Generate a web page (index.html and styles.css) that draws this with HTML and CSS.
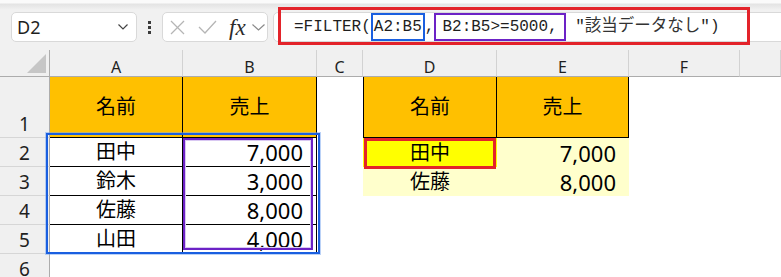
FILE: index.html
```html
<!DOCTYPE html>
<html lang="ja">
<head>
  <meta charset="UTF-8" />
  <title>FILTER 関数</title>
  <link rel="stylesheet" href="styles.css">
</head>
<body>

<div class="toolbar">
  <div class="namebox">
    <span class="cellref">D2</span>
    <svg class="chev" width="10" height="6" viewBox="0 0 10 6"><polyline points="0.5,0.5 5,5 9.5,0.5" /></svg>
  </div>
  <div class="grip"><i></i><i></i><i></i></div>
  <div class="fxbox">
    <svg class="ico-x" width="15" height="15" viewBox="0 0 15 15"><line x1="1" y1="1" x2="14" y2="14" /><line x1="14" y1="1" x2="1" y2="14" /></svg>
    <svg class="ico-ok" width="19" height="14" viewBox="0 0 19 14"><polyline points="1,7 7,13 18,1" /></svg>
    <span class="fx">fx</span>
    <svg class="chev small" width="13" height="7" viewBox="0 0 13 7"><polyline points="0.5,0.5 6.5,6 12.5,0.5" /></svg>
  </div>
  <div class="formula">
    <div class="ftext">=FILTER(<span class="ref blue">A2:B5</span>,<span class="ref purple">B2:B5&gt;=5000,</span> "<span class="jp">該当データなし</span>")</div>
    <div class="mark"></div>
  </div>
</div>

<div class="sheet">
  <!-- column headers -->
  <div class="ch corner"><span class="tri"></span></div>
  <div class="ch">A</div>
  <div class="ch">B</div>
  <div class="ch">C</div>
  <div class="ch">D</div>
  <div class="ch">E</div>
  <div class="ch">F</div>
  <div class="ch"></div>

  <!-- row 1 -->
  <div class="rh">1</div>
  <div class="c bd head">名前</div>
  <div class="c bd head">売上</div>
  <div class="c"></div>
  <div class="c bd bl head">名前</div>
  <div class="c bd head">売上</div>
  <div class="c"></div>
  <div class="c"></div>

  <!-- row 2 -->
  <div class="rh">2</div>
  <div class="c bd name">田中</div>
  <div class="c bd num">7,000</div>
  <div class="c"></div>
  <div class="c name hit">田中</div>
  <div class="c num pale">7,000</div>
  <div class="c"></div>
  <div class="c"></div>

  <!-- row 3 -->
  <div class="rh">3</div>
  <div class="c bd name">鈴木</div>
  <div class="c bd num">3,000</div>
  <div class="c"></div>
  <div class="c name pale">佐藤</div>
  <div class="c num pale">8,000</div>
  <div class="c"></div>
  <div class="c"></div>

  <!-- row 4 -->
  <div class="rh">4</div>
  <div class="c bd name">佐藤</div>
  <div class="c bd num">8,000</div>
  <div class="c"></div>
  <div class="c"></div>
  <div class="c"></div>
  <div class="c"></div>
  <div class="c"></div>

  <!-- row 5 -->
  <div class="rh">5</div>
  <div class="c bd name">山田</div>
  <div class="c bd num">4,000</div>
  <div class="c"></div>
  <div class="c"></div>
  <div class="c"></div>
  <div class="c"></div>
  <div class="c"></div>

  <!-- row 6 -->
  <div class="rh">6</div>
  <div class="c"></div>
  <div class="c"></div>
  <div class="c"></div>
  <div class="c"></div>
  <div class="c"></div>
  <div class="c"></div>
  <div class="c"></div>

  <!-- annotation frames -->
  <div class="frame frame-blue"></div>
  <div class="frame frame-purple"></div>
  <div class="frame frame-red"></div>
</div>

</body>
</html>
```

FILE: styles.css
```css
* {
  box-sizing: border-box;
}
html, body {
  margin: 0;
}
body {
  width: 781px;
  height: 277px;
  overflow: hidden;
  background: #fff;
  color: #000;
  font-family: "Noto Sans", "Noto Sans CJK JP", sans-serif;
}

/* formula bar */
.toolbar {
  height: 50px;
  display: flex;
  align-items: flex-start;
  padding-top: 12px;
  background: linear-gradient(#fafafa 0, #fafafa 3px, #e3e3e3 4px, #f1f1f1 10px);
}
.namebox {
  margin-left: 11px;
  width: 126px;
  height: 30px;
  background: #fff;
  border: 1px solid #d9d9d9;
  border-radius: 5px;
  display: flex;
  align-items: center;
  padding: 0 8px 0 5px;
}
.cellref {
  flex: 1;
  font-size: 18px;
  color: #1f1f1f;
}
.chev {
  fill: none;
  stroke: #444;
  stroke-width: 1.2;
}
.chev.small {
  stroke: #8a8a8a;
  margin-left: 6px;
}
.grip {
  width: 25px;
  height: 30px;
  display: flex;
  flex-direction: column;
  align-items: center;
  justify-content: center;
  gap: 2px;
}
.grip i {
  width: 3px;
  height: 3px;
  background: #3a3a3a;
}
.fxbox {
  width: 106px;
  height: 30px;
  background: #fff;
  border: 1px solid #d9d9d9;
  border-radius: 5px;
  display: flex;
  align-items: center;
  padding-left: 7px;
}
.ico-x, .ico-ok {
  fill: none;
  stroke: #b5b5b5;
  stroke-width: 1.3;
}
.ico-ok {
  margin-left: 13px;
}
.fx {
  margin-left: 12px;
  font-family: "Liberation Serif", serif;
  font-style: italic;
  font-size: 23px;
  line-height: 1;
  color: #2b2b2b;
}
.formula {
  position: relative;
  flex: 1;
  margin-left: 5px;
  margin-right: -10px;
  height: 30px;
  background: #fff;
  border: 1px solid #d9d9d9;
  border-radius: 5px 0 0 5px;
  padding-left: 20px;
}
.ftext {
  white-space: pre;
  font-family: "Liberation Mono", "Noto Sans CJK JP", monospace;
  font-size: 16px;
  line-height: 28px;
  color: #1f1f1f;
}
.ref {
  display: inline-block;
  vertical-align: top;
  line-height: 24px;
  border: 2px solid;
}
.ref.blue {
  border-color: #1a5fe0;
  padding: 0 1px;
}
.ref.purple {
  border-color: #6c22c6;
  padding: 0 6px;
}
.jp {
  font-size: 16.5px;
  color: #333;
}
.mark {
  position: absolute;
  left: 4px;
  top: -6px;
  width: 472px;
  height: 38px;
  border: 3px solid #e3232a;
}

/* worksheet */
.sheet {
  position: relative;
  display: grid;
  grid-template-columns: 50px 133px 134px 46px 134px 132px 111px 41px;
  grid-template-rows: 27px 61px 29px 29px 29px 29px 29px;
}
.ch {
  background: #f0f0f0;
  border-right: 1px solid #d2d2d2;
  border-bottom: 1px solid #acacac;
  display: flex;
  align-items: flex-end;
  justify-content: center;
  padding-bottom: 1px;
  font-size: 16px;
  line-height: 1;
  color: #1f1f1f;
}
.corner {
  border-right-color: #acacac;
  justify-content: flex-end;
  padding: 0 3px 3px 0;
}
.tri {
  width: 19px;
  height: 19px;
  background: #c6c6c6;
  clip-path: polygon(100% 0, 100% 100%, 0 100%);
}
.rh {
  background: #f0f0f0;
  border-right: 1px solid #acacac;
  border-bottom: 1px solid #d6d6d6;
  display: flex;
  align-items: flex-end;
  justify-content: center;
  padding-bottom: 3px;
  font-size: 19px;
  line-height: 1;
  color: #1f1f1f;
}
.c {
  display: flex;
  align-items: center;
  line-height: 1;
}
.bd {
  border-right: 1px solid #000;
  border-bottom: 1px solid #000;
}
.bl {
  border-left: 1px solid #000;
}
.head {
  background: #ffc000;
  justify-content: center;
  font-size: 20px;
}
.name {
  justify-content: center;
  font-size: 20px;
}
.num {
  justify-content: flex-end;
  padding-right: 13px;
  font-size: 22px;
}
.pale {
  background: #ffffcc;
}
.hit {
  background: #ffff00;
}
.frame {
  position: absolute;
  pointer-events: none;
}
.frame-blue {
  left: 46px;
  top: 83px;
  width: 274px;
  height: 121px;
  border: 2px solid #1a5fe0;
  box-shadow: 0 0 0 1px rgba(120, 165, 240, 0.5);
}
.frame-purple {
  left: 183px;
  top: 88px;
  width: 130px;
  height: 112px;
  border: 2px solid #6c22c6;
  box-shadow: inset 0 0 0 1px #d9c8f2;
}
.frame-red {
  left: 364px;
  top: 88px;
  width: 132px;
  height: 31px;
  border: 3px solid #e3232a;
}
```
